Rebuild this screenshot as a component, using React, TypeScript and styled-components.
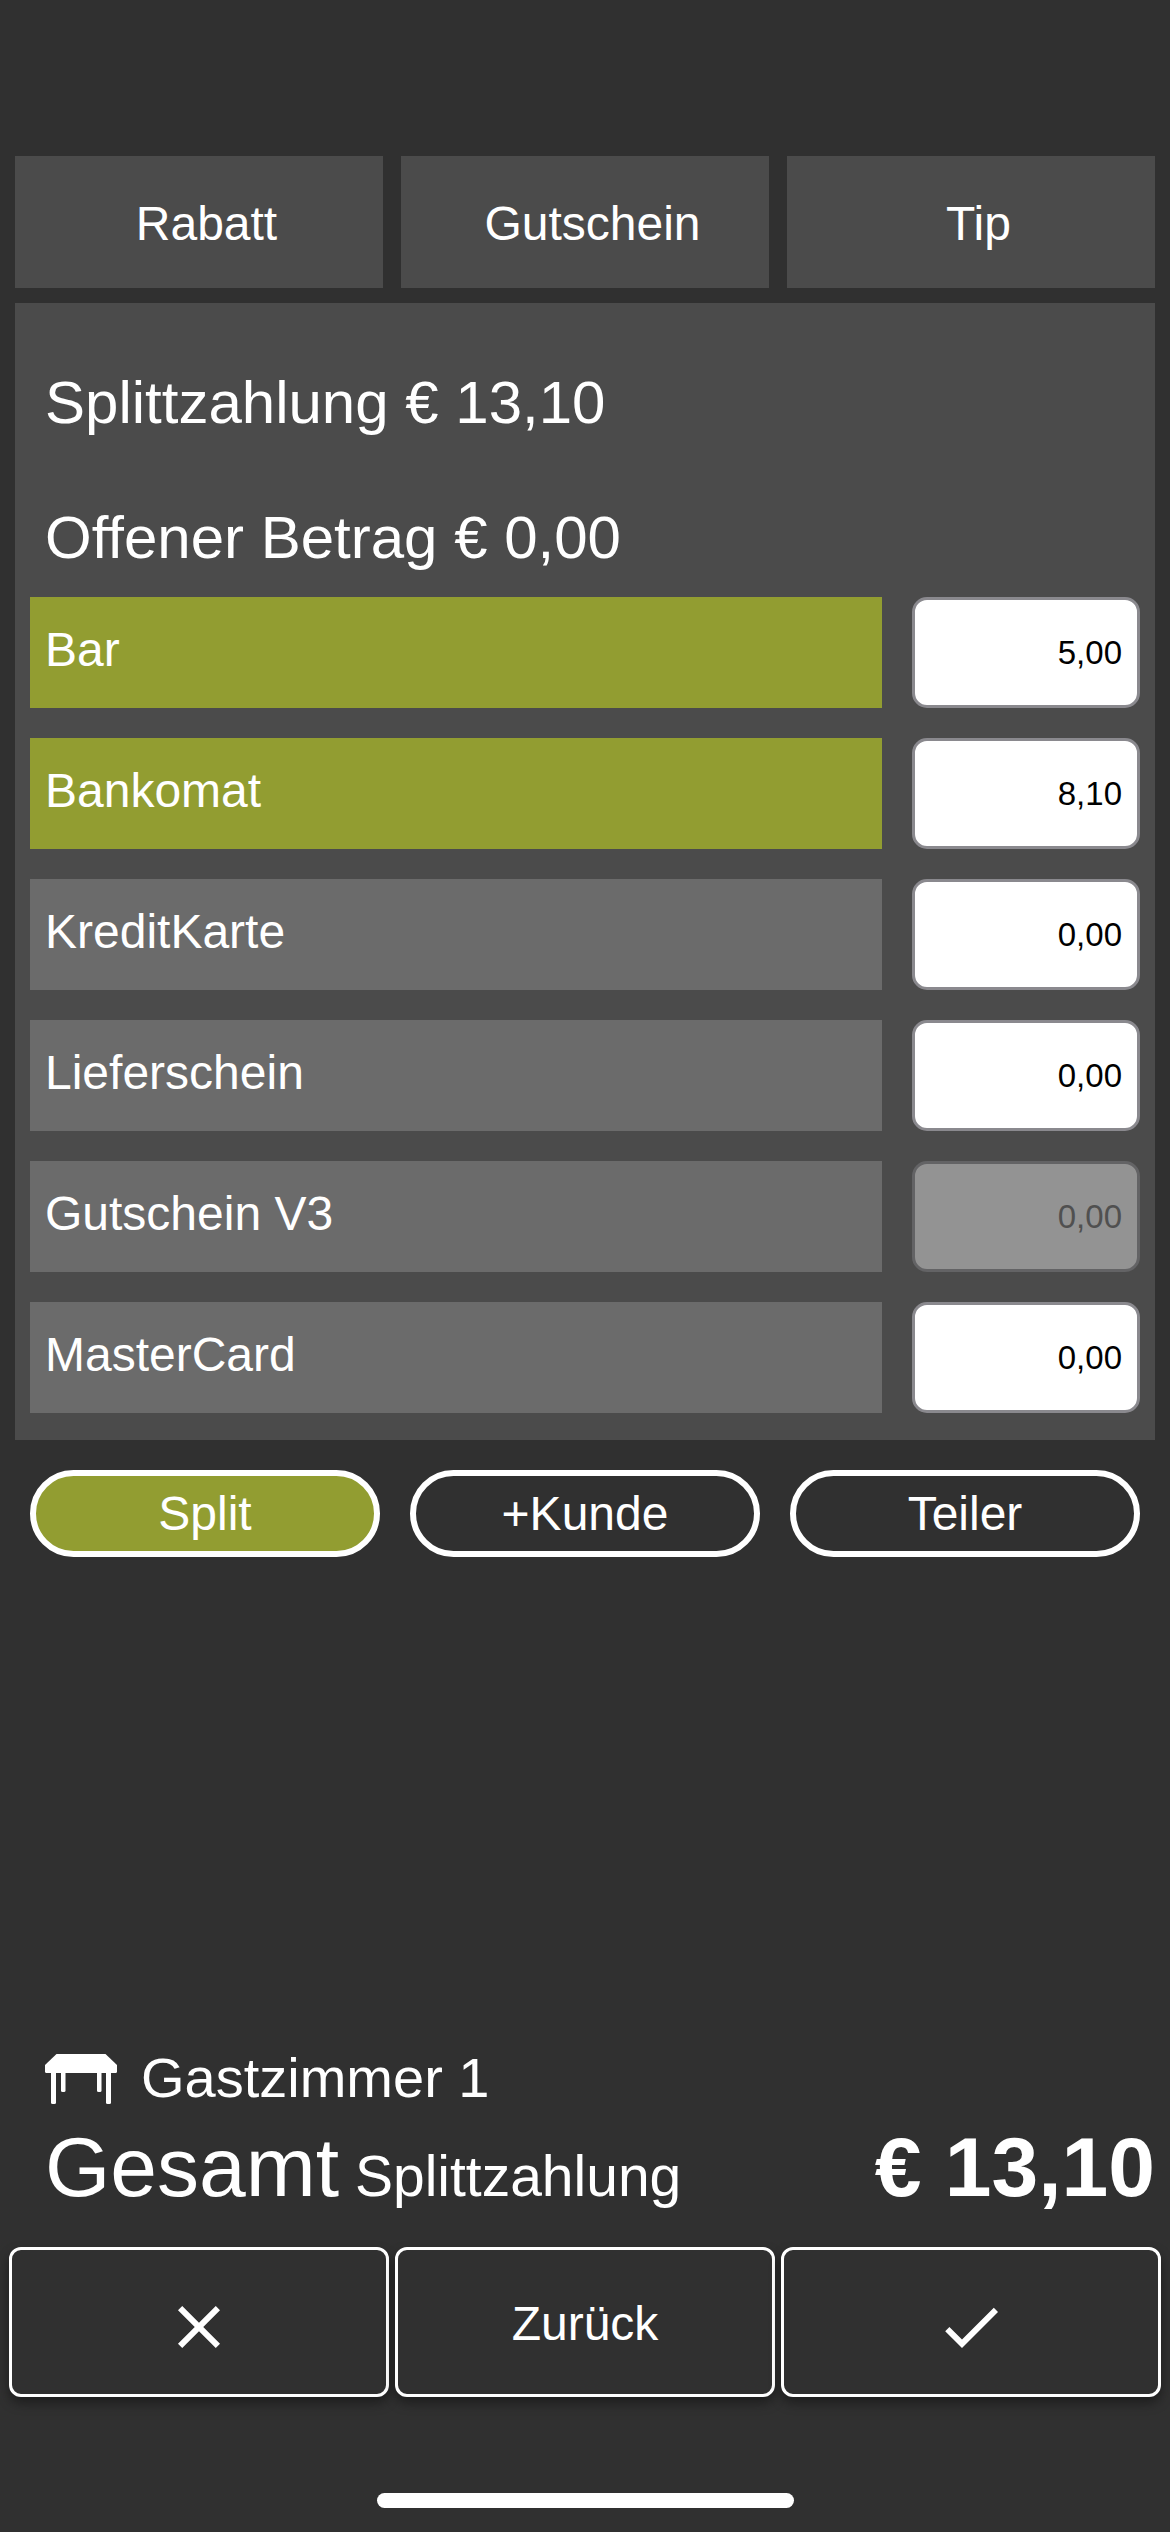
import React, { useState } from "react";
import styled, { createGlobalStyle } from "styled-components";

const color = {
  page: "#303030",
  panel: "#4b4b4b",
  row: "#6b6b6b",
  accent: "#929d31",
  inputBorder: "#8a898e",
};

const GlobalStyle = createGlobalStyle`
  * { box-sizing: border-box; }
  body {
    margin: 0;
    background: ${color.page};
    color: #fff;
    font-family: "Liberation Sans", Helvetica, Arial, sans-serif;
    font-size: 48px;
  }
  button, input { font: inherit; color: inherit; margin: 0; }
  button { cursor: pointer; }
`;

const Screen = styled.div`
  display: flex;
  flex-direction: column;
  min-height: 100vh;
  padding-top: 156px;
`;

const Actions = styled.nav`
  display: grid;
  grid-template-columns: repeat(3, 1fr);
  gap: 18px;
  margin: 0 15px 15px;
`;

const ActionButton = styled.button`
  height: 132px;
  padding: 3px 0 0 15px;
  border: 0;
  background: ${color.panel};
`;

const Panel = styled.main`
  margin: 0 15px;
  padding: 64px 15px 27px;
  background: ${color.panel};
`;

const Summary = styled.div`
  display: flex;
  flex-direction: column;
  gap: 63px;
  padding-left: 15px;
  margin-bottom: 23px;
`;

const SummaryLine = styled.h2`
  margin: 0;
  font-size: 60px;
  line-height: 72px;
  font-weight: 400;
`;

const Methods = styled.div`
  display: flex;
  flex-direction: column;
  gap: 30px;
`;

const MethodRow = styled.div`
  display: flex;
  gap: 30px;
  height: 111px;
`;

const MethodLabel = styled.label<{ $active: boolean }>`
  display: flex;
  flex: 1;
  align-items: center;
  padding: 0 15px 6px;
  background: ${(p) => (p.$active ? color.accent : color.row)};
`;

const AmountInput = styled.input`
  width: 228px;
  padding: 0 15px;
  border: 3px solid ${color.inputBorder};
  border-radius: 15px;
  background: #fff;
  color: #000;
  font-size: 33px;
  text-align: right;

  &:disabled {
    border-color: #636365;
    background: #939393;
    color: #505050;
  }
`;

const Pills = styled.div`
  display: grid;
  grid-template-columns: repeat(3, 1fr);
  gap: 30px;
  margin: 30px;
`;

const Pill = styled.button<{ $active?: boolean }>`
  height: 87px;
  padding: 0;
  border: 6px solid #fff;
  border-radius: 44px;
  background: ${(p) => (p.$active ? color.accent : "transparent")};
`;

const Footer = styled.footer`
  margin-top: auto;
`;

const Place = styled.div`
  display: flex;
  align-items: center;
  gap: 24px;
  height: 64px;
  margin: 0 45px 10px;
  font-size: 56px;
`;

const Total = styled.div`
  display: flex;
  align-items: baseline;
  justify-content: space-between;
  margin: 0 15px 32px 45px;
  font-size: 84px;
  line-height: 96px;
`;

const TotalKind = styled.span`
  font-size: 57px;
  line-height: 1;
`;

const Buttons = styled.div`
  display: grid;
  grid-template-columns: repeat(3, 1fr);
  gap: 6px;
  margin: 0 9px;
`;

const FooterButton = styled.button<{ $icon?: boolean }>`
  display: flex;
  align-items: center;
  justify-content: center;
  height: 150px;
  padding: ${(p) => (p.$icon ? "10px" : "2px")} 0 0;
  border: 3px solid #fff;
  border-radius: 12px;
  background: ${color.page};
  box-shadow: 0 6px 12px rgba(0, 0, 0, 0.4);
`;

const HomeBar = styled.div`
  width: 417px;
  height: 15px;
  margin: 96px auto 24px;
  border-radius: 8px;
  background: #fff;
`;

const TableIcon = () => (
  <svg width="72" height="54" viewBox="0 0 72 54" fill="#fff" aria-hidden="true">
    <path d="M11.5 4h49L72 15v6.500a1.500 1.500 0 0 1-1.500 1.500h-69a1.500 1.500 0 0 1-1.500-1.500V15z" />
    <rect x="6" y="20" width="5" height="34" rx="1.5" />
    <rect x="16" y="20" width="4.5" height="22" rx="1.5" />
    <rect x="52" y="20" width="4.5" height="22" rx="1.5" />
    <rect x="61" y="20" width="5" height="34" rx="1.5" />
  </svg>
);

const CloseIcon = () => (
  <svg width="72" height="72" viewBox="0 0 24 24" fill="#fff" aria-hidden="true">
    <path d="M19 6.41 17.59 5 12 10.59 6.41 5 5 6.41 10.59 12 5 17.59 6.41 19 12 13.41 17.59 19 19 17.59 13.41 12z" />
  </svg>
);

const DoneIcon = () => (
  <svg width="72" height="72" viewBox="0 0 24 24" fill="#fff" aria-hidden="true">
    <path d="M9 16.2 4.8 12l-1.4 1.4L9 19 21 7l-1.4-1.4z" />
  </svg>
);

type Method = { id: string; name: string; amount: string; disabled?: boolean };

const initialMethods: Method[] = [
  { id: "bar", name: "Bar", amount: "5,00" },
  { id: "bankomat", name: "Bankomat", amount: "8,10" },
  { id: "kreditkarte", name: "KreditKarte", amount: "0,00" },
  { id: "lieferschein", name: "Lieferschein", amount: "0,00" },
  { id: "gutschein", name: "Gutschein V3", amount: "0,00", disabled: true },
  { id: "mastercard", name: "MasterCard", amount: "0,00" },
];

const total = 13.1;
const parse = (text: string) => parseFloat(text.replace(",", ".")) || 0;
const euro = (value: number) => `€ ${value.toFixed(2).replace(".", ",")}`;

export default function App() {
  const [methods, setMethods] = useState(initialMethods);
  const paid = methods.reduce((sum, m) => sum + parse(m.amount), 0);

  const setAmount = (id: string, amount: string) =>
    setMethods((list) => list.map((m) => (m.id === id ? { ...m, amount } : m)));

  return (
    <>
      <GlobalStyle />
      <Screen>
        <Actions>
          <ActionButton type="button">Rabatt</ActionButton>
          <ActionButton type="button">Gutschein</ActionButton>
          <ActionButton type="button">Tip</ActionButton>
        </Actions>

        <Panel>
          <Summary>
            <SummaryLine>Splittzahlung {euro(total)}</SummaryLine>
            <SummaryLine>Offener Betrag {euro(Math.max(0, total - paid))}</SummaryLine>
          </Summary>
          <Methods>
            {methods.map((m) => (
              <MethodRow key={m.id}>
                <MethodLabel htmlFor={m.id} $active={parse(m.amount) > 0}>
                  {m.name}
                </MethodLabel>
                <AmountInput
                  id={m.id}
                  type="text"
                  inputMode="decimal"
                  value={m.amount}
                  disabled={m.disabled}
                  onChange={(e) => setAmount(m.id, e.target.value)}
                />
              </MethodRow>
            ))}
          </Methods>
        </Panel>

        <Pills>
          <Pill type="button" $active>
            Split
          </Pill>
          <Pill type="button">+Kunde</Pill>
          <Pill type="button">Teiler</Pill>
        </Pills>

        <Footer>
          <Place>
            <TableIcon />
            <span>Gastzimmer 1</span>
          </Place>
          <Total>
            <span>
              Gesamt<TotalKind> Splittzahlung</TotalKind>
            </span>
            <strong>{euro(total)}</strong>
          </Total>
          <Buttons>
            <FooterButton type="button" $icon aria-label="Abbrechen">
              <CloseIcon />
            </FooterButton>
            <FooterButton type="button">Zurück</FooterButton>
            <FooterButton type="button" $icon aria-label="Bestätigen">
              <DoneIcon />
            </FooterButton>
          </Buttons>
          <HomeBar />
        </Footer>
      </Screen>
    </>
  );
}
